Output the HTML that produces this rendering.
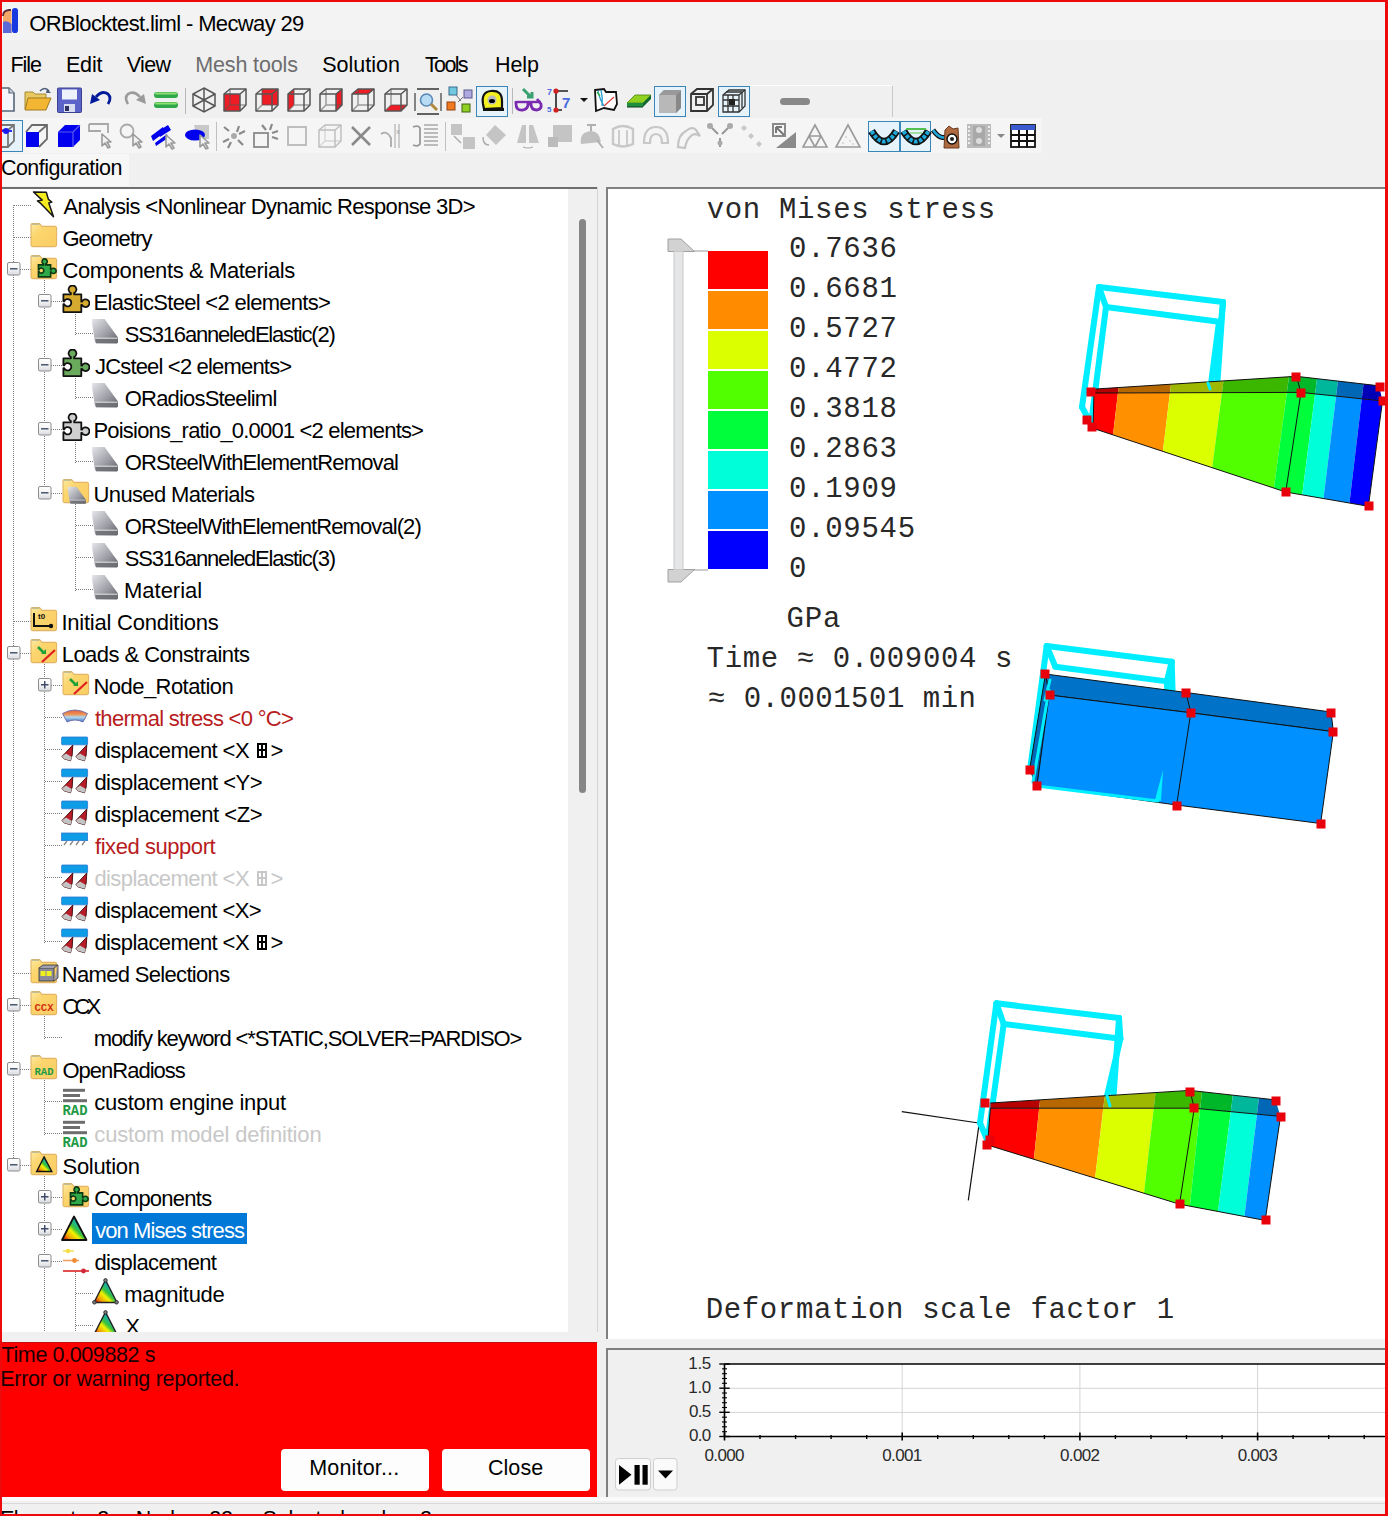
<!DOCTYPE html>
<html><head><meta charset="utf-8"><style>
html,body{margin:0;padding:0;}
body{width:1388px;height:1516px;position:relative;overflow:hidden;background:#f0f0f0;font-family:"Liberation Sans",sans-serif;}
.r{position:absolute;}
.t{position:absolute;white-space:pre;}
svg{position:absolute;overflow:visible;}
</style></head><body>
<div class="r" style="left:0px;top:0px;width:1388px;height:40px;background:#f3f3f3;"></div>
<div class="r" style="left:0px;top:40px;width:1388px;height:44px;background:#f0f0f0;"></div>
<div class="r" style="left:0px;top:84px;width:1388px;height:34px;background:#f0f0f0;"></div>
<div class="r" style="left:0px;top:118px;width:1042px;height:35px;background:#f5f5f5;"></div>
<div class="r" style="left:1042px;top:118px;width:346px;height:35px;background:#f0f0f0;"></div>
<div class="r" style="left:0px;top:153px;width:1388px;height:34px;background:#f0f0f0;"></div>
<div class="r" style="left:0px;top:154px;width:129px;height:32px;background:#f7f7f7;"></div>
<svg style="left:-6.0px;top:86.0px" width="28" height="28" viewBox="0 0 28 28"><path d="M-4,2 H15 L20,7 V25 H-4 Z" fill="#f4f6fa" stroke="#56657a" stroke-width="1.6"/><path d="M15,2 V7 H20" fill="#c9d2dd" stroke="#56657a" stroke-width="1.2"/></svg>
<svg style="left:23.5px;top:86.0px" width="28" height="28" viewBox="0 0 28 28"><path d="M1,6 H9 L11,8 H22 V23 H1 Z" fill="#e8c860" stroke="#a88a30" stroke-width="1"/><path d="M4,12 H27 L22,24 H1 Z" fill="#f2b632" stroke="#a07a20" stroke-width="1"/><path d="M16,5 Q21,0 25,5" fill="none" stroke="#4a5a78" stroke-width="1.6"/><path d="M23,3 L27,7 L22,7 Z" fill="#4a5a78"/></svg>
<svg style="left:55.5px;top:86.0px" width="28" height="28" viewBox="0 0 28 28"><rect x="1.5" y="2" width="24" height="24.5" rx="1" fill="#5b63c8" stroke="#3a4090" stroke-width="1"/><rect x="6" y="3.5" width="15" height="10" fill="#eef2fb"/><rect x="8" y="18" width="11" height="8" fill="#d8dcf0"/><rect x="9" y="20" width="4" height="5" fill="#303060"/></svg>
<svg style="left:87.5px;top:86.0px" width="28" height="28" viewBox="0 0 28 28"><path d="M8,11 Q14,4 20,8 Q24,12 20,18" fill="none" stroke="#001a9a" stroke-width="2.8"/><path d="M2,18 L4,8 L12,14 Z" fill="#001a9a"/></svg>
<svg style="left:119.5px;top:86.0px" width="28" height="28" viewBox="0 0 28 28"><path d="M20,11 Q14,4 8,8 Q4,12 8,18" fill="none" stroke="#9a9a9a" stroke-width="2.6"/><path d="M26,18 L24,8 L16,14 Z" fill="#9a9a9a"/></svg>
<svg style="left:151.5px;top:86.0px" width="28" height="28" viewBox="0 0 28 28"><rect x="2" y="6" width="24" height="6" rx="3" fill="#2ea84a"/><rect x="2" y="16" width="24" height="6" rx="3" fill="#2ea84a"/><rect x="3" y="6.5" width="22" height="2" rx="1" fill="#8ee070"/><rect x="3" y="16.5" width="22" height="2" rx="1" fill="#8ee070"/></svg>
<div class="r" style="left:185px;top:88px;width:1px;height:26px;background:#b8b8b8"></div>
<svg style="left:189.5px;top:86.0px" width="28" height="28" viewBox="0 0 28 28"><g fill="none" stroke="#555" stroke-width="1.5"><path d="M14,2 L25,8 V20 L14,26 L3,20 V8 Z"/><path d="M14,2 V26 M3,8 L25,20 M25,8 L3,20"/></g></svg>
<svg style="left:221.0px;top:86.0px" width="28" height="28" viewBox="0 0 28 28"><path d="M3,8 H19 V25 H3 Z" fill="#ee1c24"/><g fill="none" stroke="#555" stroke-width="1.5" stroke-linejoin="round"><path d="M3,8 L9,3 H25 V19 L19,25 H3 Z"/><path d="M3,8 H19 V25 M19,8 L25,3"/><path d="M9,3 V19 H25 M9,19 L3,25" opacity="0.55"/></g></svg>
<svg style="left:253.0px;top:86.0px" width="28" height="28" viewBox="0 0 28 28"><path d="M9,3 H25 V19 H9 Z" fill="#ee1c24"/><g fill="none" stroke="#555" stroke-width="1.5" stroke-linejoin="round"><path d="M3,8 L9,3 H25 V19 L19,25 H3 Z"/><path d="M3,8 H19 V25 M19,8 L25,3"/><path d="M9,3 V19 H25 M9,19 L3,25" opacity="0.55"/></g></svg>
<svg style="left:285.0px;top:86.0px" width="28" height="28" viewBox="0 0 28 28"><path d="M3,8 L9,3 V19 L3,25 Z" fill="#ee1c24"/><g fill="none" stroke="#555" stroke-width="1.5" stroke-linejoin="round"><path d="M3,8 L9,3 H25 V19 L19,25 H3 Z"/><path d="M3,8 H19 V25 M19,8 L25,3"/><path d="M9,3 V19 H25 M9,19 L3,25" opacity="0.55"/></g></svg>
<svg style="left:317.0px;top:86.0px" width="28" height="28" viewBox="0 0 28 28"><path d="M19,8 L25,3 V19 L19,25 Z" fill="#ee1c24"/><g fill="none" stroke="#555" stroke-width="1.5" stroke-linejoin="round"><path d="M3,8 L9,3 H25 V19 L19,25 H3 Z"/><path d="M3,8 H19 V25 M19,8 L25,3"/><path d="M9,3 V19 H25 M9,19 L3,25" opacity="0.55"/></g></svg>
<svg style="left:349.0px;top:86.0px" width="28" height="28" viewBox="0 0 28 28"><path d="M3,8 L9,3 H25 L19,8 Z" fill="#ee1c24"/><g fill="none" stroke="#555" stroke-width="1.5" stroke-linejoin="round"><path d="M3,8 L9,3 H25 V19 L19,25 H3 Z"/><path d="M3,8 H19 V25 M19,8 L25,3"/><path d="M9,3 V19 H25 M9,19 L3,25" opacity="0.55"/></g></svg>
<svg style="left:381.5px;top:86.0px" width="28" height="28" viewBox="0 0 28 28"><path d="M3,25 L9,19 H25 L19,25 Z" fill="#ee1c24"/><g fill="none" stroke="#555" stroke-width="1.5" stroke-linejoin="round"><path d="M3,8 L9,3 H25 V19 L19,25 H3 Z"/><path d="M3,8 H19 V25 M19,8 L25,3"/><path d="M9,3 V19 H25 M9,19 L3,25" opacity="0.55"/></g></svg>
<svg style="left:413.5px;top:87.0px" width="28" height="28" viewBox="0 0 28 28"><path d="M3,2 H25 M3,27 H25" stroke="#333" stroke-width="1.6"/><path d="M1,6 V24 M27,6 V24" stroke="#555" stroke-width="1.4"/><circle cx="12.5" cy="13" r="6" fill="#b8dcf4" stroke="#5a88b8" stroke-width="1.6"/><path d="M17,17 L23,23" stroke="#b08a40" stroke-width="3"/></svg>
<svg style="left:445.5px;top:86.0px" width="28" height="28" viewBox="0 0 28 28"><rect x="3" y="1" width="8" height="8" fill="#70c8e0" stroke="#3a6a8a"/><rect x="18" y="4" width="8" height="8" fill="#b0a8e0" stroke="#5a5a8a"/><rect x="1" y="16" width="8" height="8" fill="#f07820" stroke="#904010"/><rect x="16" y="18" width="8" height="8" fill="#90d020" stroke="#406010"/><path d="M10,9 L15,15 M17,11 L12,16" stroke="#777" stroke-width="1"/></svg>
<div class="r" style="left:476px;top:85.5px;width:30px;height:29.0px;border:1px solid #3a86b8;background:#e6f3fb"></div>
<svg style="left:478.0px;top:86.5px" width="28" height="28" viewBox="0 0 28 28"><path d="M5,17 Q3,5 13,4 Q24,3 24,14 L24,21 L6,22 Z" fill="#f5f020" stroke="#111" stroke-width="2.2"/><path d="M5,21 H26 L26,24 H5 Z" fill="#111"/><circle cx="14" cy="13" r="4.5" fill="#bbb"/><ellipse cx="14" cy="14" rx="3" ry="2" fill="#000"/></svg>
<div class="r" style="left:512px;top:88px;width:1px;height:26px;background:#b8b8b8"></div>
<svg style="left:515.0px;top:87.0px" width="28" height="28" viewBox="0 0 28 28"><path d="M8,2 L16,10 M12,10 H17 V5" stroke="#3aa070" stroke-width="3" fill="none"/><path d="M1,14 V17 Q1,24 8,23 Q13,22 13,17 H16 Q16,23 22,23 Q27,22 26,17 L22,12" fill="none" stroke="#7a2ab0" stroke-width="2.8"/><path d="M1,15 H26" stroke="#7a2ab0" stroke-width="2.4"/></svg>
<svg style="left:546.0px;top:86.0px" width="28" height="28" viewBox="0 0 28 28"><text x="1" y="9" font-family="Liberation Sans" font-weight="bold" font-size="9" fill="#4a6ae0">7</text><text x="1" y="26" font-family="Liberation Sans" font-weight="bold" font-size="8" fill="#4a6ae0">5</text><path d="M10,5 V24 H16 M10,5 H22" stroke="#222" stroke-width="1.6" fill="none"/><circle cx="10" cy="5" r="2.6" fill="#d02020"/><circle cx="10" cy="24" r="2.6" fill="#d02020"/><text x="16" y="22" font-family="Liberation Sans" font-weight="bold" font-size="15" fill="#4a6ae0">7</text></svg>
<svg style="left:570.0px;top:86.0px" width="28" height="28" viewBox="0 0 28 28"><path d="M10,12 H18 L14,16 Z" fill="#111"/></svg>
<svg style="left:592.0px;top:86.0px" width="28" height="28" viewBox="0 0 28 28"><path d="M3,4 L12,3 L14,6 L24,6 L25,18 L22,24 L12,22 L4,25 Z" fill="#fff" stroke="#111" stroke-width="1.8"/><path d="M6,5 Q8,14 12,20 M9,4 Q11,12 10,20" stroke="#2aa0d0" stroke-width="1.3" fill="none"/><path d="M12,20 L22,11" stroke="#e04040" stroke-width="1.2"/><path d="M5,6 L8,10" stroke="#30b040" stroke-width="1.3"/></svg>
<svg style="left:624.5px;top:86.0px" width="28" height="28" viewBox="0 0 28 28"><path d="M2,17 L10,9 H26 L18,17 Z" fill="#90d020" stroke="#4a8010" stroke-width="0.8"/><path d="M2,17 H18 V21 H2 Z" fill="#209040"/><path d="M18,17 L26,9 V13 L18,21 Z" fill="#106a30"/><path d="M2,21 H18" stroke="#0a3a1a" stroke-width="1"/></svg>
<div class="r" style="left:654px;top:85.5px;width:30px;height:29.0px;border:1px solid #3a86b8;background:#e6f3fb"></div>
<svg style="left:656.0px;top:86.5px" width="28" height="28" viewBox="0 0 28 28"><path d="M3,8 L8,3 H25 V21 L20,26 H3 Z" fill="#b8b8b8"/><path d="M20,8 L25,3 V21 L20,26 Z" fill="#888"/><path d="M3,8 L8,3 H25 L20,8 Z" fill="#999"/></svg>
<svg style="left:688.0px;top:86.0px" width="28" height="28" viewBox="0 0 28 28"><g fill="none" stroke="#333" stroke-width="1.8"><path d="M3,8 L9,3 H25 V19 L19,25 H3 Z"/><path d="M3,8 H19 V25 M19,8 L25,3"/><rect x="8" y="11" width="8" height="8"/></g></svg>
<div class="r" style="left:718px;top:85.5px;width:30px;height:29.0px;border:1px solid #3a86b8;background:#e6f3fb"></div>
<svg style="left:720.0px;top:86.5px" width="28" height="28" viewBox="0 0 28 28"><g fill="none" stroke="#333" stroke-width="1.3"><path d="M3,8 L9,3 H25 V19 L19,25 H3 Z"/><path d="M3,8 H19 V25 M19,8 L25,3"/><path d="M3,13 H19 M3,19 H19 M8,8 V25 M13,8 V25 M6,5 H22 M22,5 V21"/></g><rect x="9" y="12" width="6" height="6" fill="#222"/></svg>
<div class="r" style="left:750px;top:85px;width:141px;height:1px;background:#ffffff"></div>
<div class="r" style="left:780px;top:98px;width:30px;height:7px;border-radius:3.5px;background:#888"></div>
<div class="r" style="left:892px;top:86px;width:1px;height:31px;background:#c8c8c8"></div>
<div class="r" style="left:0px;top:120px;width:21px;height:30px;border:1px solid #3a86b8;background:#e6f3fb"></div>
<svg style="left:-2.0px;top:121.5px" width="28" height="28" viewBox="0 0 28 28"><g fill="none" stroke="#777" stroke-width="1.8"><path d="M-2,8 L4,3 H16 V19 L10,25 H-2"/><path d="M10,8 V25 M10,8 L16,3"/></g><path d="M-2,8 H10" stroke="#777" stroke-width="1.8"/><circle cx="8" cy="9" r="3" fill="#1a1aee"/><path d="M1,9 H14" stroke="#1a1aee" stroke-width="1.8"/></svg>
<svg style="left:23.5px;top:121.5px" width="28" height="28" viewBox="0 0 28 28"><path d="M2,10 H15 V25 H2 Z" fill="#0000ee"/><g fill="none" stroke="#6a6a6a" stroke-width="1.8"><path d="M2,10 L8,3 H23 V17 L15,25 M15,10 L23,3"/></g></svg>
<svg style="left:55.5px;top:121.5px" width="28" height="28" viewBox="0 0 28 28"><path d="M2,10 L9,3 H24 V18 L17,25 H2 Z" fill="#0000ee"/><path d="M2,10 H17 V25 M17,10 L24,3" stroke="#5a5aee" stroke-width="1.2" fill="none"/></svg>
<svg style="left:86.5px;top:121.5px" width="28" height="28" viewBox="0 0 28 28"><path d="M2,2 H21 V11 M2,2 V9 H14" fill="none" stroke="#a8a8a8" stroke-width="1.8"/><path d="M15,12 L15,24 L18,21 L21,26 L23,25 L20,20 L24,20 Z" fill="#f2f2f2" stroke="#9a9a9a" stroke-width="1.6" stroke-linejoin="round"/></svg>
<svg style="left:118.0px;top:121.5px" width="28" height="28" viewBox="0 0 28 28"><circle cx="9" cy="9" r="6.5" fill="none" stroke="#a8a8a8" stroke-width="1.8"/><path d="M15,12 L15,24 L18,21 L21,26 L23,25 L20,20 L24,20 Z" fill="#f2f2f2" stroke="#9a9a9a" stroke-width="1.6" stroke-linejoin="round"/></svg>
<svg style="left:149.5px;top:121.5px" width="28" height="28" viewBox="0 0 28 28"><path d="M1,14 L13,5 L15,10 L3,19 Z M5,21 L17,12 L18,16 L6,24 Z" fill="#0000ee"/><path d="M7,10 L18,3 L21,8 L10,15 Z" fill="#0000ee"/><path d="M16,13 L16,25 L19,22 L22,27 L24,26 L21,21 L25,21 Z" fill="#f2f2f2" stroke="#9a9a9a" stroke-width="1.6" stroke-linejoin="round"/></svg>
<svg style="left:183.5px;top:121.5px" width="28" height="28" viewBox="0 0 28 28"><path d="M10,3 H25 V17 H14 Z" fill="#c8c8c8"/><ellipse cx="11" cy="13" rx="10" ry="5.5" fill="#0000ee"/><path d="M16,13 L16,25 L19,22 L22,27 L24,26 L21,21 L25,21 Z" fill="#f2f2f2" stroke="#9a9a9a" stroke-width="1.6" stroke-linejoin="round"/></svg>
<div class="r" style="left:216px;top:122px;width:1px;height:29px;background:#c0c0c0"></div>
<svg style="left:220.0px;top:121.5px" width="28" height="28" viewBox="0 0 28 28"><circle cx="14" cy="14" r="3" fill="#aaa"/><g stroke="#8a8a8a" stroke-width="2.2"><path d="M4,5 L9,9 M19,4 L17,10 M25,9 L19,12 M3,20 L9,17 M8,26 L11,20 M23,23 L18,18"/></g></svg>
<svg style="left:252.0px;top:121.5px" width="28" height="28" viewBox="0 0 28 28"><rect x="2" y="11" width="14" height="14" fill="none" stroke="#8a8a8a" stroke-width="1.8"/><g stroke="#8a8a8a" stroke-width="2.2"><path d="M10,3 L14,8 M20,2 L18,8 M26,9 L20,11 M26,17 L20,15"/></g></svg>
<svg style="left:283.5px;top:121.5px" width="28" height="28" viewBox="0 0 28 28"><rect x="4" y="5" width="18" height="18" fill="none" stroke="#b8b8b8" stroke-width="1.8"/></svg>
<svg style="left:315.5px;top:121.5px" width="28" height="28" viewBox="0 0 28 28"><g fill="none" stroke="#bdbdbd" stroke-width="1.4" stroke-linejoin="round"><path d="M3,8 L9,3 H25 V19 L19,25 H3 Z"/><path d="M3,8 H19 V25 M19,8 L25,3"/><path d="M9,3 V19 H25 M9,19 L3,25" opacity="0.55"/></g></svg>
<svg style="left:347.0px;top:121.5px" width="28" height="28" viewBox="0 0 28 28"><path d="M5,5 L23,23 M23,5 L5,23" stroke="#8a8a8a" stroke-width="2.6"/></svg>
<svg style="left:379.0px;top:121.5px" width="28" height="28" viewBox="0 0 28 28"><path d="M2,12 Q8,8 12,16 V25" fill="none" stroke="#aaa" stroke-width="1.8"/><path d="M16,2 V26 M20,2 V26" stroke="#bbb" stroke-width="1.4"/><text x="17" y="12" font-size="6" fill="#999" font-family="Liberation Sans">X</text></svg>
<svg style="left:412.0px;top:121.5px" width="28" height="28" viewBox="0 0 28 28"><path d="M1,5 Q6,3 8,6 V22 Q6,25 1,23" fill="none" stroke="#9a9a9a" stroke-width="1.8"/><g stroke="#a8a8a8" stroke-width="1.6"><path d="M12,3 H26 M12,7 H26 M12,11 H26 M12,15 H26 M12,19 H26 M12,23 H26"/></g></svg>
<div class="r" style="left:445px;top:122px;width:1px;height:29px;background:#c0c0c0"></div>
<svg style="left:449.0px;top:121.5px" width="28" height="28" viewBox="0 0 28 28"><rect x="2" y="2" width="11" height="11" fill="#c4c4c4"/><rect x="14" y="15" width="12" height="12" fill="#c4c4c4"/><path d="M5,14 L12,21" stroke="#aaa" stroke-width="1.4"/></svg>
<svg style="left:481.0px;top:121.5px" width="28" height="28" viewBox="0 0 28 28"><path d="M14,3 L25,13 L15,23 L5,13 Z" fill="#c4c4c4"/><path d="M2,15 Q2,23 8,23" fill="none" stroke="#aaa" stroke-width="1.4"/></svg>
<svg style="left:514.0px;top:121.5px" width="28" height="28" viewBox="0 0 28 28"><path d="M3,21 L8,3 H12 V21 Z M15,3 H19 L25,21 H15 Z" fill="#c4c4c4"/><path d="M9,25 Q14,27 19,25" fill="none" stroke="#aaa" stroke-width="1.2"/></svg>
<svg style="left:545.5px;top:121.5px" width="28" height="28" viewBox="0 0 28 28"><rect x="7" y="3" width="19" height="17" fill="#c4c4c4"/><rect x="2" y="15" width="10" height="10" fill="#bbb"/></svg>
<svg style="left:577.0px;top:121.5px" width="28" height="28" viewBox="0 0 28 28"><path d="M4,22 Q2,10 14,9 Q22,9 24,20 Z" fill="#c0c0c0"/><path d="M10,3 H19 M14,3 V9 M20,18 L26,26" stroke="#b0b0b0" stroke-width="2"/></svg>
<svg style="left:609.0px;top:121.5px" width="28" height="28" viewBox="0 0 28 28"><path d="M4,7 Q14,1 24,7 V22 Q14,27 4,22 Z" fill="none" stroke="#c8c8c8" stroke-width="2.4"/><path d="M10,8 V23 M18,8 V23" stroke="#c8c8c8" stroke-width="1.8"/></svg>
<svg style="left:641.5px;top:121.5px" width="28" height="28" viewBox="0 0 28 28"><path d="M2,21 Q2,5 14,5 Q26,5 26,21 H20 Q20,12 14,12 Q8,12 8,21 Z" fill="none" stroke="#c8c8c8" stroke-width="2.2"/></svg>
<svg style="left:674.0px;top:121.5px" width="28" height="28" viewBox="0 0 28 28"><path d="M4,25 Q4,13 12,9 Q18,4 22,8 L26,14 Q20,10 16,15 Q12,19 11,26 Z" fill="none" stroke="#c4c4c4" stroke-width="2.2"/></svg>
<svg style="left:705.5px;top:121.5px" width="28" height="28" viewBox="0 0 28 28"><circle cx="4" cy="4" r="3" fill="#aaa"/><circle cx="24" cy="4" r="3" fill="#aaa"/><path d="M6,6 L12,12 M22,6 L16,12 M14,16 V25" stroke="#999" stroke-width="2"/><circle cx="14" cy="21" r="2.5" fill="#aaa"/></svg>
<svg style="left:738.0px;top:121.5px" width="28" height="28" viewBox="0 0 28 28"><path d="M3,6 L6,3 L9,6 L6,9 Z M10,14 L13,11 L16,14 L13,17 Z M18,22 L21,19 L24,22 L21,25 Z" fill="#c8c8c8"/></svg>
<svg style="left:770.5px;top:121.5px" width="28" height="28" viewBox="0 0 28 28"><rect x="2" y="2" width="12" height="12" fill="none" stroke="#8a8a8a" stroke-width="2"/><path d="M5,5 L13,13 M5,5 H11 M5,5 V11" stroke="#777" stroke-width="2"/><path d="M5,26 L25,26 L25,10 Z" fill="#8a8a8a"/></svg>
<svg style="left:801.0px;top:121.5px" width="28" height="28" viewBox="0 0 28 28"><path d="M14,3 L26,25 H2 Z M8,14 H20 M14,25 L20,14 M14,25 L8,14" fill="none" stroke="#9a9a9a" stroke-width="1.6"/></svg>
<svg style="left:833.5px;top:121.5px" width="28" height="28" viewBox="0 0 28 28"><path d="M14,3 L26,25 H2 Z" fill="none" stroke="#9a9a9a" stroke-width="1.6"/><g fill="#bbb"><circle cx="12" cy="15" r="0.8"/><circle cx="16" cy="19" r="0.8"/><circle cx="9" cy="21" r="0.8"/><circle cx="19" cy="22" r="0.8"/></g></svg>
<div class="r" style="left:868px;top:120.5px;width:30px;height:29.5px;border:1px solid #3a86b8;background:#e6f3fb"></div>
<div class="r" style="left:900px;top:120.5px;width:29px;height:29.5px;border:1px solid #3a86b8;background:#e6f3fb"></div>
<svg style="left:870.0px;top:122.0px" width="28" height="28" viewBox="0 0 28 28"><path d="M1.5,9 Q14,30 26.5,9" fill="none" stroke="#111" stroke-width="7.5"/><path d="M1.5,9 Q14,30 26.5,9" fill="none" stroke="#20a8d8" stroke-width="4" stroke-dasharray="3.5 1.5"/></svg>
<svg style="left:901.5px;top:122.0px" width="28" height="28" viewBox="0 0 28 28"><path d="M1.5,9 Q14,30 26.5,9" fill="none" stroke="#111" stroke-width="7.5"/><path d="M1.5,9 Q14,30 26.5,9" fill="none" stroke="#20a8d8" stroke-width="4" stroke-dasharray="3.5 1.5"/><path d="M4,7 H24" stroke="#50c050" stroke-width="2"/><path d="M8,11 H20" stroke="#a0e0a0" stroke-width="2"/></svg>
<svg style="left:932.5px;top:121.5px" width="28" height="28" viewBox="0 0 28 28"><path d="M0,8 Q10,22 18,10" fill="none" stroke="#111" stroke-width="5"/><path d="M0,8 Q10,22 18,10" fill="none" stroke="#20a8d8" stroke-width="2.6"/><path d="M12,8 L16,4 L20,7 L25,6 L26,26 L11,26 Z" fill="#b06a40" stroke="#6a3a20" stroke-width="1"/><circle cx="19" cy="17" r="5" fill="#fff" stroke="#111" stroke-width="1.5"/><circle cx="19" cy="17" r="2" fill="#222"/></svg>
<svg style="left:965.0px;top:121.5px" width="28" height="28" viewBox="0 0 28 28"><rect x="2" y="2" width="24" height="24" fill="#bbb"/><path d="M4,4 V24 M24,4 V24" stroke="#eee" stroke-width="2" stroke-dasharray="2 2"/><rect x="8" y="4" width="12" height="20" fill="#a8a8a8"/><circle cx="14" cy="8" r="3" fill="#ddd"/><circle cx="14" cy="19" r="3" fill="#ddd"/></svg>
<svg style="left:987.0px;top:121.5px" width="28" height="28" viewBox="0 0 28 28"><path d="M10,12 H18 L14,16 Z" fill="#888"/></svg>
<svg style="left:1008.5px;top:121.5px" width="28" height="28" viewBox="0 0 28 28"><rect x="2" y="3" width="24" height="22" fill="#fff" stroke="#111" stroke-width="1.8"/><rect x="2" y="3" width="24" height="5" fill="#3a5ad0"/><path d="M2,13 H26 M2,19 H26 M10,8 V25 M18,8 V25" stroke="#111" stroke-width="2"/></svg>
<svg style="left:0;top:0" width="22" height="36" viewBox="0 0 22 36"><path d="M3,16 Q3,10.5 9,10 L11.5,10 L11.5,33 L3,33 Z" fill="#f4a868"/><path d="M3,16 Q3,10.5 9,10 L11,10" fill="none" stroke="#5a2a3a" stroke-width="1.8"/><path d="M3,22 Q7,20 11.5,24 L11.5,33 L3,33 Z" fill="#5a68d8"/><rect x="12" y="8" width="6" height="25" rx="2.8" fill="#1838e0"/></svg>
<div class="t" style="left:29.26px;top:10.97px;font-size:22px;line-height:26px;font-family:'Liberation Sans',sans-serif;color:#000;letter-spacing:-0.633px;">ORBlocktest.liml - Mecway 29</div>
<div class="t" style="left:10.44px;top:52.35px;font-size:21.5px;line-height:26px;font-family:'Liberation Sans',sans-serif;color:#000;letter-spacing:-1.042px;">File</div>
<div class="t" style="left:65.94px;top:52.35px;font-size:21.5px;line-height:26px;font-family:'Liberation Sans',sans-serif;color:#000;letter-spacing:-0.175px;">Edit</div>
<div class="t" style="left:126.71px;top:52.35px;font-size:21.5px;line-height:26px;font-family:'Liberation Sans',sans-serif;color:#000;letter-spacing:-0.620px;">View</div>
<div class="t" style="left:195.24px;top:52.35px;font-size:21.5px;line-height:26px;font-family:'Liberation Sans',sans-serif;color:#6d6d6d;letter-spacing:-0.136px;">Mesh tools</div>
<div class="t" style="left:322.22px;top:52.35px;font-size:21.5px;line-height:26px;font-family:'Liberation Sans',sans-serif;color:#000;letter-spacing:-0.003px;">Solution</div>
<div class="t" style="left:425.02px;top:52.35px;font-size:21.5px;line-height:26px;font-family:'Liberation Sans',sans-serif;color:#000;letter-spacing:-1.654px;">Tools</div>
<div class="t" style="left:494.94px;top:52.35px;font-size:21.5px;line-height:26px;font-family:'Liberation Sans',sans-serif;color:#000;letter-spacing:-0.084px;">Help</div>
<div class="t" style="left:0.91px;top:155.45px;font-size:21.5px;line-height:26px;font-family:'Liberation Sans',sans-serif;color:#000;letter-spacing:-0.533px;">Configuration</div>
<div class="r" style="left:2px;top:187px;width:596px;height:1145px;background:#ffffff;"></div>
<div class="r" style="left:2px;top:187px;width:596px;height:2px;background:#6e6e6e;"></div>
<div class="r" style="left:568px;top:189px;width:29px;height:1143px;background:#f0f0f0;"></div>
<div class="r" style="left:579px;top:219px;width:7px;height:574px;background:#858585;border-radius:4px;"></div>
<div class="r" style="left:597px;top:187px;width:1px;height:1145px;background:#d4d4d4;"></div>
<div class="r" style="left:2px;top:1332px;width:596px;height:10px;background:#f0f0f0;"></div>

<svg width="0" height="0" style="position:absolute;left:0;top:0">
<defs>
<linearGradient id="gFold" x1="0" y1="0" x2="1" y2="1"><stop offset="0" stop-color="#fdeaa0"/><stop offset="0.35" stop-color="#fcd56e"/><stop offset="1" stop-color="#f9cd62"/></linearGradient>
<linearGradient id="gMat" x1="0" y1="0" x2="1" y2="1"><stop offset="0" stop-color="#e4e4ea"/><stop offset="0.6" stop-color="#9a9aa2"/><stop offset="1" stop-color="#5d5d64"/></linearGradient>
<linearGradient id="gBox" x1="0" y1="0" x2="0" y2="1"><stop offset="0" stop-color="#ffffff"/><stop offset="0.5" stop-color="#f4f4f4"/><stop offset="1" stop-color="#d8dbe2"/></linearGradient>
<linearGradient id="gTri" x1="1" y1="0" x2="0" y2="1"><stop offset="0.15" stop-color="#1c6fd0"/><stop offset="0.35" stop-color="#18b39a"/><stop offset="0.5" stop-color="#3cc23c"/><stop offset="0.62" stop-color="#f2f200"/><stop offset="0.8" stop-color="#f0a000"/><stop offset="0.95" stop-color="#d01010"/></linearGradient>
<linearGradient id="gArc" x1="0" y1="0" x2="0" y2="1"><stop offset="0" stop-color="#e06040"/><stop offset="0.35" stop-color="#f09050"/><stop offset="0.6" stop-color="#b0d8f0"/><stop offset="1" stop-color="#4070c0"/></linearGradient>
<symbol id="folder" viewBox="0 0 28 28" width="28" height="28">
 <path d="M1,2.2 Q1,0.6 2.6,0.6 H9.5 L12,3.4 H25 Q26.6,3.4 26.6,5 V22 Q26.6,23.6 25,23.6 H2.6 Q1,23.6 1,22 Z" fill="url(#gFold)" stroke="#e2b466" stroke-width="1.1"/>
 <path d="M1.5,1.2 H9.2" stroke="#b8b89a" stroke-width="1.2"/>
</symbol>
<symbol id="puzzleP" viewBox="0 0 28 28" width="28" height="28">
 <path d="M1.4,9.3 H8.9 V8 A3.9,3.9 0 1 1 12.1,8 V9.3 H19.3 V16.6 H20 A3.9,3.9 0 1 1 20,19.8 H19.3 V27.1 H1.4 V19.2 H2.2 A3.7,3.7 0 1 0 2.2,16.3 H1.4 Z" stroke="#111" stroke-width="1.8" stroke-linejoin="round"/>
</symbol>
<symbol id="mat" viewBox="0 0 28 28" width="28" height="28">
 <path d="M1.2,1 H13.6 L27,19.5 V24.6 L26,25.4 H5.2 L4,24 L1,5 Z" fill="url(#gMat)"/>
 <path d="M4.2,20.4 H26.6 V25 H5.2 Z" fill="#6f6f76" opacity="0.85"/>
 <path d="M4.2,20.2 H26.6" stroke="#eeeef2" stroke-width="0.9"/>
</symbol>
<symbol id="bolt" viewBox="0 0 28 28" width="28" height="28">
 <path d="M3.5,2 L16.3,2.3 L18.4,9.4 L21.8,12 L18.8,13 L23.5,26.8 L10,12.8 L7.4,10.9 L12.2,10.1 Z" fill="#f4ec20" stroke="#151515" stroke-width="1.5" stroke-linejoin="round"/>
</symbol>
<symbol id="disp" viewBox="0 0 28 28" width="28" height="28">
 <rect x="0.6" y="1" width="26" height="7.8" rx="0.8" fill="#0f9ce6" stroke="#2a7ad0" stroke-width="0.8"/>
 <path d="M11.8,9 L1,20.5 L3,22.8 L9.5,24.8 L11.2,19 Z" fill="#b81c28" stroke="#3a0808" stroke-width="0.9"/>
 <path d="M1,20.5 L5,17.5 L10.8,21 L9.5,24.8 L3,22.8 Z" fill="#c4c4c4"/>
 <path d="M25.8,9 L15,20.5 L17,22.8 L23.5,24.8 L25.2,19 Z" fill="#b81c28" stroke="#3a0808" stroke-width="0.9"/>
 <path d="M15,20.5 L19,17.5 L24.8,21 L23.5,24.8 L17,22.8 Z" fill="#c4c4c4"/>
</symbol>
<symbol id="fixed" viewBox="0 0 28 28" width="28" height="28">
 <rect x="0.6" y="1" width="26" height="7.6" fill="#0f9ce6" stroke="#2a7ad0" stroke-width="0.8"/>
 <path d="M3,13 L6,9 M9,13 L12,9 M15,13 L18,9 M21,13 L24,9" stroke="#8a8a8a" stroke-width="1.4"/>
</symbol>
<symbol id="arc" viewBox="0 0 28 28" width="28" height="28">
 <path d="M1.5,4.5 Q14,-2.5 26.5,4.5 L22,13 Q14,9 6,13 Z" fill="url(#gArc)" stroke="#6a6aa8" stroke-width="0.9"/>
</symbol>
<symbol id="tri" viewBox="0 0 28 28" width="28" height="28">
 <path d="M13,1.5 L25.5,25 H1 Z" fill="url(#gTri)" stroke="#111" stroke-width="1.8" stroke-linejoin="round"/>
</symbol>
<symbol id="trinode" viewBox="0 0 28 28" width="28" height="28">
 <path d="M13.5,2 L25,24.5 H2 Z" fill="url(#gTri)" stroke="#222" stroke-width="1.4"/>
 <circle cx="13.5" cy="2.4" r="1.8" fill="#777" stroke="#222" stroke-width="0.8"/>
 <circle cx="2.4" cy="24.3" r="1.8" fill="#777" stroke="#222" stroke-width="0.8"/>
 <circle cx="24.6" cy="24.3" r="1.8" fill="#777" stroke="#222" stroke-width="0.8"/>
</symbol>
<symbol id="darrows" viewBox="0 0 28 28" width="28" height="28">
 <path d="M1,4 H12" stroke="#f5e060" stroke-width="1.6"/><circle cx="6" cy="4" r="2.2" fill="#f5e040"/>
 <path d="M1,13.5 H17" stroke="#f0a060" stroke-width="1.6"/><circle cx="12.5" cy="13.5" r="2.4" fill="#f08a30"/>
 <path d="M1,24 H27" stroke="#e03c3c" stroke-width="1.8"/><circle cx="21.5" cy="24" r="2.4" fill="#d02a3a"/>
</symbol>
<symbol id="raddoc" viewBox="0 0 28 28" width="28" height="28">
 <rect x="2" y="0.8" width="22" height="3" fill="#6d6d6d"/>
 <rect x="2" y="6" width="17" height="3" fill="#6d6d6d"/>
 <rect x="2" y="11.2" width="24" height="3" fill="#6d6d6d"/>
 <text x="1.5" y="26.5" font-family="Liberation Mono" font-weight="bold" font-size="14" fill="#1e9a46" textLength="25" lengthAdjust="spacingAndGlyphs">RAD</text>
</symbol>
<symbol id="exp_minus" viewBox="0 0 14 14" width="14" height="14">
 <rect x="0.5" y="0.5" width="12.5" height="12.5" rx="1.5" fill="url(#gBox)" stroke="#8c8c8c" stroke-width="1"/>
 <path d="M3,6.8 H10.5" stroke="#3b4a66" stroke-width="1.4"/>
</symbol>
<symbol id="exp_plus" viewBox="0 0 14 14" width="14" height="14">
 <rect x="0.5" y="0.5" width="12.5" height="12.5" rx="1.5" fill="url(#gBox)" stroke="#8c8c8c" stroke-width="1"/>
 <path d="M3,6.8 H10.5 M6.75,3 V10.5" stroke="#3b4a66" stroke-width="1.4"/>
</symbol>
</defs></svg>

<div class="r" style="left:0;top:0;width:568px;height:1332px;overflow:hidden">
<div class="r" style="left:13px;top:205px;width:1px;height:961px;background:repeating-linear-gradient(to bottom,#7c7c7c 0 1px,transparent 1px 2px)"></div>
<div class="r" style="left:44px;top:278px;width:1px;height:217px;background:repeating-linear-gradient(to bottom,#7c7c7c 0 1px,transparent 1px 2px)"></div>
<div class="r" style="left:44px;top:662px;width:1px;height:281px;background:repeating-linear-gradient(to bottom,#7c7c7c 0 1px,transparent 1px 2px)"></div>
<div class="r" style="left:44px;top:1014px;width:1px;height:25px;background:repeating-linear-gradient(to bottom,#7c7c7c 0 1px,transparent 1px 2px)"></div>
<div class="r" style="left:44px;top:1078px;width:1px;height:57px;background:repeating-linear-gradient(to bottom,#7c7c7c 0 1px,transparent 1px 2px)"></div>
<div class="r" style="left:44px;top:1174px;width:1px;height:158px;background:repeating-linear-gradient(to bottom,#7c7c7c 0 1px,transparent 1px 2px)"></div>
<div class="r" style="left:75px;top:310px;width:1px;height:25px;background:repeating-linear-gradient(to bottom,#7c7c7c 0 1px,transparent 1px 2px)"></div>
<div class="r" style="left:75px;top:374px;width:1px;height:25px;background:repeating-linear-gradient(to bottom,#7c7c7c 0 1px,transparent 1px 2px)"></div>
<div class="r" style="left:75px;top:438px;width:1px;height:25px;background:repeating-linear-gradient(to bottom,#7c7c7c 0 1px,transparent 1px 2px)"></div>
<div class="r" style="left:75px;top:502px;width:1px;height:89px;background:repeating-linear-gradient(to bottom,#7c7c7c 0 1px,transparent 1px 2px)"></div>
<div class="r" style="left:75px;top:1270px;width:1px;height:62px;background:repeating-linear-gradient(to bottom,#7c7c7c 0 1px,transparent 1px 2px)"></div>
<div class="r" style="left:92px;top:1213px;width:155px;height:31px;background:#0078d7"></div>
<div class="r" style="left:14px;top:205px;width:17px;height:1px;background:repeating-linear-gradient(to right,#7c7c7c 0 1px,transparent 1px 2px)"></div>
<svg style="left:30px;top:189.5px" width="28" height="28"><use href="#bolt"/></svg>
<div class="t" style="left:63.46px;top:193.77px;font-size:22px;line-height:26px;font-family:'Liberation Sans',sans-serif;color:#000;letter-spacing:-0.689px;">Analysis &lt;Nonlinear Dynamic Response 3D&gt;</div>
<div class="r" style="left:14px;top:237px;width:17px;height:1px;background:repeating-linear-gradient(to right,#7c7c7c 0 1px,transparent 1px 2px)"></div>
<svg style="left:30px;top:223px" width="28" height="28"><use href="#folder"/></svg>
<div class="t" style="left:62.39px;top:225.77px;font-size:22px;line-height:26px;font-family:'Liberation Sans',sans-serif;color:#000;letter-spacing:-0.919px;">Geometry</div>
<div class="r" style="left:20px;top:269px;width:11px;height:1px;background:repeating-linear-gradient(to right,#7c7c7c 0 1px,transparent 1px 2px)"></div>
<svg style="left:7px;top:262px" width="14" height="14"><use href="#exp_minus"/></svg>
<svg style="left:30px;top:255px" width="28" height="28"><use href="#folder"/><g transform="translate(7.5,3.5) scale(0.68)"><path d="M1.4,9.3 H8.9 V8 A3.9,3.9 0 1 1 12.1,8 V9.3 H19.3 V16.6 H20 A3.9,3.9 0 1 1 20,19.8 H19.3 V27.1 H1.4 V19.2 H2.2 A3.7,3.7 0 1 0 2.2,16.3 H1.4 Z" fill="#2faa4a" stroke="#0d3a12" stroke-width="2.4"/></g></svg>
<div class="t" style="left:62.38px;top:257.77px;font-size:22px;line-height:26px;font-family:'Liberation Sans',sans-serif;color:#000;letter-spacing:-0.380px;">Components &amp; Materials</div>
<div class="r" style="left:51px;top:301px;width:11px;height:1px;background:repeating-linear-gradient(to right,#7c7c7c 0 1px,transparent 1px 2px)"></div>
<svg style="left:38px;top:294px" width="14" height="14"><use href="#exp_minus"/></svg>
<svg style="left:61.5px;top:285px" width="28" height="28"><use href="#puzzleP" fill="#d6aa2e"/></svg>
<div class="t" style="left:93.50px;top:289.77px;font-size:22px;line-height:26px;font-family:'Liberation Sans',sans-serif;color:#000;letter-spacing:-0.708px;">ElasticSteel &lt;2 elements&gt;</div>
<div class="r" style="left:76px;top:333px;width:17px;height:1px;background:repeating-linear-gradient(to right,#7c7c7c 0 1px,transparent 1px 2px)"></div>
<svg style="left:91.3px;top:318px" width="28" height="28"><use href="#mat"/></svg>
<div class="t" style="left:124.80px;top:321.77px;font-size:22px;line-height:26px;font-family:'Liberation Sans',sans-serif;color:#000;letter-spacing:-1.189px;">SS316anneledElastic(2)</div>
<div class="r" style="left:51px;top:365px;width:11px;height:1px;background:repeating-linear-gradient(to right,#7c7c7c 0 1px,transparent 1px 2px)"></div>
<svg style="left:38px;top:358px" width="14" height="14"><use href="#exp_minus"/></svg>
<svg style="left:61.5px;top:349px" width="28" height="28"><use href="#puzzleP" fill="#6aaa5c"/></svg>
<div class="t" style="left:94.96px;top:353.77px;font-size:22px;line-height:26px;font-family:'Liberation Sans',sans-serif;color:#000;letter-spacing:-0.819px;">JCsteel &lt;2 elements&gt;</div>
<div class="r" style="left:76px;top:397px;width:17px;height:1px;background:repeating-linear-gradient(to right,#7c7c7c 0 1px,transparent 1px 2px)"></div>
<svg style="left:91.3px;top:382px" width="28" height="28"><use href="#mat"/></svg>
<div class="t" style="left:124.76px;top:385.77px;font-size:22px;line-height:26px;font-family:'Liberation Sans',sans-serif;color:#000;letter-spacing:-0.809px;">ORadiosSteeliml</div>
<div class="r" style="left:51px;top:429px;width:11px;height:1px;background:repeating-linear-gradient(to right,#7c7c7c 0 1px,transparent 1px 2px)"></div>
<svg style="left:38px;top:422px" width="14" height="14"><use href="#exp_minus"/></svg>
<svg style="left:61.5px;top:413px" width="28" height="28"><use href="#puzzleP" fill="#cfcfcf"/></svg>
<div class="t" style="left:93.50px;top:417.77px;font-size:22px;line-height:26px;font-family:'Liberation Sans',sans-serif;color:#000;letter-spacing:-0.808px;">Poisions_ratio_0.0001 &lt;2 elements&gt;</div>
<div class="r" style="left:76px;top:461px;width:17px;height:1px;background:repeating-linear-gradient(to right,#7c7c7c 0 1px,transparent 1px 2px)"></div>
<svg style="left:91.3px;top:446px" width="28" height="28"><use href="#mat"/></svg>
<div class="t" style="left:124.76px;top:449.77px;font-size:22px;line-height:26px;font-family:'Liberation Sans',sans-serif;color:#000;letter-spacing:-0.852px;">ORSteelWithElementRemoval</div>
<div class="r" style="left:51px;top:493px;width:11px;height:1px;background:repeating-linear-gradient(to right,#7c7c7c 0 1px,transparent 1px 2px)"></div>
<svg style="left:38px;top:486px" width="14" height="14"><use href="#exp_minus"/></svg>
<svg style="left:61.5px;top:479px" width="28" height="28"><use href="#folder"/><g transform="translate(5,7) scale(0.7)"><use href="#mat"/></g></svg>
<div class="t" style="left:93.60px;top:481.77px;font-size:22px;line-height:26px;font-family:'Liberation Sans',sans-serif;color:#000;letter-spacing:-0.653px;">Unused Materials</div>
<div class="r" style="left:76px;top:525px;width:17px;height:1px;background:repeating-linear-gradient(to right,#7c7c7c 0 1px,transparent 1px 2px)"></div>
<svg style="left:91.3px;top:510px" width="28" height="28"><use href="#mat"/></svg>
<div class="t" style="left:124.76px;top:513.77px;font-size:22px;line-height:26px;font-family:'Liberation Sans',sans-serif;color:#000;letter-spacing:-0.909px;">ORSteelWithElementRemoval(2)</div>
<div class="r" style="left:76px;top:557px;width:17px;height:1px;background:repeating-linear-gradient(to right,#7c7c7c 0 1px,transparent 1px 2px)"></div>
<svg style="left:91.3px;top:542px" width="28" height="28"><use href="#mat"/></svg>
<div class="t" style="left:124.80px;top:545.77px;font-size:22px;line-height:26px;font-family:'Liberation Sans',sans-serif;color:#000;letter-spacing:-1.180px;">SS316anneledElastic(3)</div>
<div class="r" style="left:76px;top:589px;width:17px;height:1px;background:repeating-linear-gradient(to right,#7c7c7c 0 1px,transparent 1px 2px)"></div>
<svg style="left:91.3px;top:574px" width="28" height="28"><use href="#mat"/></svg>
<div class="t" style="left:124.00px;top:577.77px;font-size:22px;line-height:26px;font-family:'Liberation Sans',sans-serif;color:#000;letter-spacing:-0.010px;">Material</div>
<div class="r" style="left:14px;top:621px;width:17px;height:1px;background:repeating-linear-gradient(to right,#7c7c7c 0 1px,transparent 1px 2px)"></div>
<svg style="left:30px;top:607px" width="28" height="28"><use href="#folder"/><path d="M4,6 V19 H22" stroke="#111" stroke-width="2" fill="none"/><circle cx="21" cy="19" r="2.2" fill="#111"/><text x="8" y="12" font-family="Liberation Sans" font-weight="bold" font-size="8" fill="#111">t0</text></svg>
<div class="t" style="left:61.47px;top:609.77px;font-size:22px;line-height:26px;font-family:'Liberation Sans',sans-serif;color:#000;letter-spacing:-0.241px;">Initial Conditions</div>
<div class="r" style="left:20px;top:653px;width:11px;height:1px;background:repeating-linear-gradient(to right,#7c7c7c 0 1px,transparent 1px 2px)"></div>
<svg style="left:7px;top:646px" width="14" height="14"><use href="#exp_minus"/></svg>
<svg style="left:30px;top:639px" width="28" height="28"><use href="#folder"/><path d="M8,8 L14,14" stroke="#23a03a" stroke-width="2.6"/><path d="M11,15 L16,15 L16,10 Z" fill="#23a03a"/><path d="M12,23 L25,11" stroke="#e02020" stroke-width="2.2"/></svg>
<div class="t" style="left:61.70px;top:641.77px;font-size:22px;line-height:26px;font-family:'Liberation Sans',sans-serif;color:#000;letter-spacing:-0.539px;">Loads &amp; Constraints</div>
<div class="r" style="left:51px;top:685px;width:11px;height:1px;background:repeating-linear-gradient(to right,#7c7c7c 0 1px,transparent 1px 2px)"></div>
<svg style="left:38px;top:678px" width="14" height="14"><use href="#exp_plus"/></svg>
<svg style="left:61.5px;top:671px" width="28" height="28"><use href="#folder"/><path d="M8,8 L14,14" stroke="#23a03a" stroke-width="2.6"/><path d="M11,15 L16,15 L16,10 Z" fill="#23a03a"/><path d="M12,23 L25,11" stroke="#e02020" stroke-width="2.2"/></svg>
<div class="t" style="left:93.50px;top:673.77px;font-size:22px;line-height:26px;font-family:'Liberation Sans',sans-serif;color:#000;letter-spacing:-0.553px;">Node_Rotation</div>
<div class="r" style="left:45px;top:717px;width:17px;height:1px;background:repeating-linear-gradient(to right,#7c7c7c 0 1px,transparent 1px 2px)"></div>
<svg style="left:61.0px;top:709px" width="28" height="28"><use href="#arc"/></svg>
<div class="t" style="left:94.97px;top:705.77px;font-size:22px;line-height:26px;font-family:'Liberation Sans',sans-serif;color:#b81c1c;letter-spacing:-0.709px;">thermal stress &lt;0 °C&gt;</div>
<div class="r" style="left:45px;top:749px;width:17px;height:1px;background:repeating-linear-gradient(to right,#7c7c7c 0 1px,transparent 1px 2px)"></div>
<svg style="left:61.0px;top:736px" width="28" height="28"><use href="#disp"/></svg>
<div class="t" style="left:94.38px;top:737.77px;font-size:22px;line-height:26px;font-family:'Liberation Sans',sans-serif;color:#000;letter-spacing:-0.577px;">displacement &lt;X</div>
<div class="r" style="left:257px;top:743.2px;width:6px;height:10.7px;border:2px solid #000;background:linear-gradient(to right,transparent 2.2px,#000 2.2px 3.8px,transparent 3.8px),linear-gradient(to bottom,transparent 4.4px,#000 4.4px 6.2px,transparent 6.2px)"></div>
<div class="t" style="left:270.52px;top:737.77px;font-size:22px;line-height:26px;font-family:'Liberation Sans',sans-serif;color:#000;letter-spacing:0.000px;">&gt;</div>
<div class="r" style="left:45px;top:781px;width:17px;height:1px;background:repeating-linear-gradient(to right,#7c7c7c 0 1px,transparent 1px 2px)"></div>
<svg style="left:61.0px;top:768px" width="28" height="28"><use href="#disp"/></svg>
<div class="t" style="left:94.38px;top:769.77px;font-size:22px;line-height:26px;font-family:'Liberation Sans',sans-serif;color:#000;letter-spacing:-0.527px;">displacement &lt;Y&gt;</div>
<div class="r" style="left:45px;top:813px;width:17px;height:1px;background:repeating-linear-gradient(to right,#7c7c7c 0 1px,transparent 1px 2px)"></div>
<svg style="left:61.0px;top:800px" width="28" height="28"><use href="#disp"/></svg>
<div class="t" style="left:94.38px;top:801.77px;font-size:22px;line-height:26px;font-family:'Liberation Sans',sans-serif;color:#000;letter-spacing:-0.445px;">displacement &lt;Z&gt;</div>
<div class="r" style="left:45px;top:845px;width:17px;height:1px;background:repeating-linear-gradient(to right,#7c7c7c 0 1px,transparent 1px 2px)"></div>
<svg style="left:61.0px;top:832px" width="28" height="28"><use href="#fixed"/></svg>
<div class="t" style="left:94.99px;top:833.77px;font-size:22px;line-height:26px;font-family:'Liberation Sans',sans-serif;color:#b81c1c;letter-spacing:-0.441px;">fixed support</div>
<div class="r" style="left:45px;top:877px;width:17px;height:1px;background:repeating-linear-gradient(to right,#7c7c7c 0 1px,transparent 1px 2px)"></div>
<svg style="left:61.0px;top:864px" width="28" height="28"><use href="#disp"/></svg>
<div class="t" style="left:94.38px;top:865.77px;font-size:22px;line-height:26px;font-family:'Liberation Sans',sans-serif;color:#c8c8c8;letter-spacing:-0.577px;">displacement &lt;X</div>
<div class="r" style="left:257px;top:871.2px;width:6px;height:10.7px;border:2px solid #c8c8c8;background:linear-gradient(to right,transparent 2.2px,#c8c8c8 2.2px 3.8px,transparent 3.8px),linear-gradient(to bottom,transparent 4.4px,#c8c8c8 4.4px 6.2px,transparent 6.2px)"></div>
<div class="t" style="left:270.52px;top:865.77px;font-size:22px;line-height:26px;font-family:'Liberation Sans',sans-serif;color:#c8c8c8;letter-spacing:0.000px;">&gt;</div>
<div class="r" style="left:45px;top:909px;width:17px;height:1px;background:repeating-linear-gradient(to right,#7c7c7c 0 1px,transparent 1px 2px)"></div>
<svg style="left:61.0px;top:896px" width="28" height="28"><use href="#disp"/></svg>
<div class="t" style="left:94.38px;top:897.77px;font-size:22px;line-height:26px;font-family:'Liberation Sans',sans-serif;color:#000;letter-spacing:-0.594px;">displacement &lt;X&gt;</div>
<div class="r" style="left:45px;top:941px;width:17px;height:1px;background:repeating-linear-gradient(to right,#7c7c7c 0 1px,transparent 1px 2px)"></div>
<svg style="left:61.0px;top:928px" width="28" height="28"><use href="#disp"/></svg>
<div class="t" style="left:94.38px;top:929.77px;font-size:22px;line-height:26px;font-family:'Liberation Sans',sans-serif;color:#000;letter-spacing:-0.577px;">displacement &lt;X</div>
<div class="r" style="left:257px;top:935.2px;width:6px;height:10.7px;border:2px solid #000;background:linear-gradient(to right,transparent 2.2px,#000 2.2px 3.8px,transparent 3.8px),linear-gradient(to bottom,transparent 4.4px,#000 4.4px 6.2px,transparent 6.2px)"></div>
<div class="t" style="left:270.52px;top:929.77px;font-size:22px;line-height:26px;font-family:'Liberation Sans',sans-serif;color:#000;letter-spacing:0.000px;">&gt;</div>
<div class="r" style="left:14px;top:973px;width:17px;height:1px;background:repeating-linear-gradient(to right,#7c7c7c 0 1px,transparent 1px 2px)"></div>
<svg style="left:30px;top:959px" width="28" height="28"><use href="#folder"/><g transform="translate(9,6)"><rect x="0" y="3" width="15" height="13" fill="#8a8a9a" stroke="#333" stroke-width="0.8"/><rect x="1.5" y="6" width="5" height="5" fill="#f0f020"/><rect x="7.5" y="6" width="5" height="5" fill="#f0f020"/><path d="M0,3 L4,0 H19 L15,3 M19,0 V13 L15,16" fill="#a0a0b0" stroke="#333" stroke-width="0.8"/></g></svg>
<div class="t" style="left:61.70px;top:961.77px;font-size:22px;line-height:26px;font-family:'Liberation Sans',sans-serif;color:#000;letter-spacing:-0.669px;">Named Selections</div>
<div class="r" style="left:20px;top:1005px;width:11px;height:1px;background:repeating-linear-gradient(to right,#7c7c7c 0 1px,transparent 1px 2px)"></div>
<svg style="left:7px;top:998px" width="14" height="14"><use href="#exp_minus"/></svg>
<svg style="left:30px;top:991px" width="28" height="28"><use href="#folder"/><text x="4.5" y="19.5" font-family="Liberation Mono" font-weight="bold" font-size="11" fill="#d23010" textLength="19" lengthAdjust="spacingAndGlyphs">CCX</text></svg>
<div class="t" style="left:62.38px;top:993.77px;font-size:22px;line-height:26px;font-family:'Liberation Sans',sans-serif;color:#000;letter-spacing:-3.835px;">CCX</div>
<div class="r" style="left:45px;top:1037px;width:17px;height:1px;background:repeating-linear-gradient(to right,#7c7c7c 0 1px,transparent 1px 2px)"></div>
<div class="t" style="left:93.84px;top:1025.77px;font-size:22px;line-height:26px;font-family:'Liberation Sans',sans-serif;color:#000;letter-spacing:-1.148px;">modify keyword &lt;*STATIC,SOLVER=PARDISO&gt;</div>
<div class="r" style="left:20px;top:1069px;width:11px;height:1px;background:repeating-linear-gradient(to right,#7c7c7c 0 1px,transparent 1px 2px)"></div>
<svg style="left:7px;top:1062px" width="14" height="14"><use href="#exp_minus"/></svg>
<svg style="left:30px;top:1055px" width="28" height="28"><use href="#folder"/><text x="4.5" y="19.5" font-family="Liberation Mono" font-weight="bold" font-size="11" fill="#1e9a46" textLength="19" lengthAdjust="spacingAndGlyphs">RAD</text></svg>
<div class="t" style="left:62.46px;top:1057.77px;font-size:22px;line-height:26px;font-family:'Liberation Sans',sans-serif;color:#000;letter-spacing:-0.996px;">OpenRadioss</div>
<div class="r" style="left:45px;top:1101px;width:17px;height:1px;background:repeating-linear-gradient(to right,#7c7c7c 0 1px,transparent 1px 2px)"></div>
<svg style="left:61.0px;top:1088px" width="28" height="28"><use href="#raddoc"/></svg>
<div class="t" style="left:94.37px;top:1089.77px;font-size:22px;line-height:26px;font-family:'Liberation Sans',sans-serif;color:#000;letter-spacing:-0.289px;">custom engine input</div>
<div class="r" style="left:45px;top:1133px;width:17px;height:1px;background:repeating-linear-gradient(to right,#7c7c7c 0 1px,transparent 1px 2px)"></div>
<svg style="left:61.0px;top:1120px" width="28" height="28"><use href="#raddoc"/></svg>
<div class="t" style="left:94.37px;top:1121.77px;font-size:22px;line-height:26px;font-family:'Liberation Sans',sans-serif;color:#c8c8c8;letter-spacing:-0.175px;">custom model definition</div>
<div class="r" style="left:20px;top:1165px;width:11px;height:1px;background:repeating-linear-gradient(to right,#7c7c7c 0 1px,transparent 1px 2px)"></div>
<svg style="left:7px;top:1158px" width="14" height="14"><use href="#exp_minus"/></svg>
<svg style="left:30px;top:1151px" width="28" height="28"><use href="#folder"/><g transform="translate(6,5) scale(0.62)"><path d="M13,1.5 L25.5,25 H1 Z" fill="url(#gTri)" stroke="#111" stroke-width="2.2"/></g></svg>
<div class="t" style="left:62.50px;top:1153.77px;font-size:22px;line-height:26px;font-family:'Liberation Sans',sans-serif;color:#000;letter-spacing:-0.296px;">Solution</div>
<div class="r" style="left:51px;top:1197px;width:11px;height:1px;background:repeating-linear-gradient(to right,#7c7c7c 0 1px,transparent 1px 2px)"></div>
<svg style="left:38px;top:1190px" width="14" height="14"><use href="#exp_plus"/></svg>
<svg style="left:61.5px;top:1183px" width="28" height="28"><use href="#folder"/><g transform="translate(7.5,3.5) scale(0.68)"><path d="M1.4,9.3 H8.9 V8 A3.9,3.9 0 1 1 12.1,8 V9.3 H19.3 V16.6 H20 A3.9,3.9 0 1 1 20,19.8 H19.3 V27.1 H1.4 V19.2 H2.2 A3.7,3.7 0 1 0 2.2,16.3 H1.4 Z" fill="#2faa4a" stroke="#0d3a12" stroke-width="2.4"/></g></svg>
<div class="t" style="left:94.18px;top:1185.77px;font-size:22px;line-height:26px;font-family:'Liberation Sans',sans-serif;color:#000;letter-spacing:-0.747px;">Components</div>
<div class="r" style="left:51px;top:1229px;width:11px;height:1px;background:repeating-linear-gradient(to right,#7c7c7c 0 1px,transparent 1px 2px)"></div>
<svg style="left:38px;top:1222px" width="14" height="14"><use href="#exp_plus"/></svg>
<svg style="left:61.3px;top:1215px" width="28" height="28"><use href="#tri"/></svg>
<div class="t" style="left:95.22px;top:1217.77px;font-size:22px;line-height:26px;font-family:'Liberation Sans',sans-serif;color:#fff;letter-spacing:-0.937px;">von Mises stress</div>
<div class="r" style="left:51px;top:1261px;width:11px;height:1px;background:repeating-linear-gradient(to right,#7c7c7c 0 1px,transparent 1px 2px)"></div>
<svg style="left:38px;top:1254px" width="14" height="14"><use href="#exp_minus"/></svg>
<svg style="left:62.0px;top:1247px" width="28" height="28"><use href="#darrows"/></svg>
<div class="t" style="left:94.38px;top:1249.77px;font-size:22px;line-height:26px;font-family:'Liberation Sans',sans-serif;color:#000;letter-spacing:-0.640px;">displacement</div>
<div class="r" style="left:76px;top:1293px;width:17px;height:1px;background:repeating-linear-gradient(to right,#7c7c7c 0 1px,transparent 1px 2px)"></div>
<svg style="left:91.5px;top:1278px" width="28" height="28"><use href="#trinode"/></svg>
<div class="t" style="left:124.34px;top:1281.77px;font-size:22px;line-height:26px;font-family:'Liberation Sans',sans-serif;color:#000;letter-spacing:-0.287px;">magnitude</div>
<div class="r" style="left:76px;top:1325px;width:17px;height:1px;background:repeating-linear-gradient(to right,#7c7c7c 0 1px,transparent 1px 2px)"></div>
<svg style="left:91.5px;top:1310px" width="28" height="28"><use href="#trinode"/></svg>
<div class="t" style="left:125.31px;top:1313.77px;font-size:22px;line-height:26px;font-family:'Liberation Sans',sans-serif;color:#000;letter-spacing:0.000px;">X</div>
</div>
<div class="r" style="left:568px;top:189px;width:29px;height:1143px;background:#f0f0f0;"></div>
<div class="r" style="left:579px;top:219px;width:7px;height:574px;background:#858585;border-radius:4px;"></div>
<div class="r" style="left:597px;top:187px;width:1px;height:1145px;background:#d4d4d4;"></div>
<div class="r" style="left:606px;top:187px;width:779px;height:1152px;background:#ffffff;"></div>
<div class="r" style="left:606px;top:187px;width:779px;height:2px;background:#808080;"></div>
<div class="r" style="left:606px;top:187px;width:2px;height:1152px;background:#808080;"></div>
<svg style="left:0;top:0" width="1388" height="1516" viewBox="0 0 1388 1516"><clipPath id="cf1"><polygon points="1094.0,393.0 1301.0,392.4 1382.5,401.0 1368.4,506.3 1285.7,492.0 1093.0,428.3"/></clipPath><clipPath id="ct1"><polygon points="1095.4,389.0 1296.3,376.3 1379.0,385.8 1382.5,401.0 1301.0,392.4 1094.0,393.0"/></clipPath><line x1="1099.0" y1="287.0" x2="1223.0" y2="302.0" stroke="#00eeff" stroke-width="6" stroke-linecap="round"/><line x1="1106.0" y1="307.0" x2="1221.0" y2="322.0" stroke="#00eeff" stroke-width="6" stroke-linecap="round"/><line x1="1099.0" y1="287.0" x2="1106.0" y2="307.0" stroke="#00eeff" stroke-width="6" stroke-linecap="round"/><line x1="1223.0" y1="302.0" x2="1221.0" y2="322.0" stroke="#00eeff" stroke-width="6" stroke-linecap="round"/><line x1="1099.0" y1="287.0" x2="1082.0" y2="407.0" stroke="#00eeff" stroke-width="6" stroke-linecap="round"/><line x1="1106.0" y1="307.0" x2="1091.0" y2="424.0" stroke="#00eeff" stroke-width="6" stroke-linecap="round"/><line x1="1223.0" y1="302.0" x2="1217.0" y2="388.0" stroke="#00eeff" stroke-width="6" stroke-linecap="round"/><line x1="1219.0" y1="322.0" x2="1211.0" y2="384.0" stroke="#00eeff" stroke-width="6" stroke-linecap="round"/><line x1="1082.0" y1="407.0" x2="1091.0" y2="424.0" stroke="#00eeff" stroke-width="6" stroke-linecap="round"/><g clip-path="url(#cf1)"><polygon points="1060.0,360.0 1121.8,360.0 1101.8,530.0 1060.0,530.0" fill="#ff0000"/><polygon points="1121.8,360.0 1173.9,360.0 1153.4,530.0 1101.8,530.0" fill="#ff9000"/><polygon points="1173.9,360.0 1226.2,360.0 1204.1,530.0 1153.4,530.0" fill="#dcff00"/><polygon points="1226.2,360.0 1291.3,360.0 1268.2,530.0 1204.1,530.0" fill="#52ff00"/><polygon points="1291.3,360.0 1319.4,360.0 1297.7,530.0 1268.2,530.0" fill="#00ff3a"/><polygon points="1319.4,360.0 1340.5,360.0 1319.6,530.0 1297.7,530.0" fill="#00ffd8"/><polygon points="1340.5,360.0 1366.4,360.0 1346.3,530.0 1319.6,530.0" fill="#0090ff"/><polygon points="1366.4,360.0 1422.8,360.0 1408.3,530.0 1346.3,530.0" fill="#0000ff"/></g><g clip-path="url(#ct1)"><polygon points="1060.0,360.0 1121.8,360.0 1101.8,530.0 1060.0,530.0" fill="#b70000"/><polygon points="1121.8,360.0 1173.9,360.0 1153.4,530.0 1101.8,530.0" fill="#b76700"/><polygon points="1173.9,360.0 1226.2,360.0 1204.1,530.0 1153.4,530.0" fill="#9eb700"/><polygon points="1226.2,360.0 1291.3,360.0 1268.2,530.0 1204.1,530.0" fill="#3bb700"/><polygon points="1291.3,360.0 1319.4,360.0 1297.7,530.0 1268.2,530.0" fill="#00b729"/><polygon points="1319.4,360.0 1340.5,360.0 1319.6,530.0 1297.7,530.0" fill="#00b79b"/><polygon points="1340.5,360.0 1366.4,360.0 1346.3,530.0 1319.6,530.0" fill="#0067b7"/><polygon points="1366.4,360.0 1422.8,360.0 1408.3,530.0 1346.3,530.0" fill="#0000b7"/></g><polygon points="1094.0,393.0 1301.0,392.4 1382.5,401.0 1368.4,506.3 1285.7,492.0 1093.0,428.3" fill="none" stroke="#111" stroke-width="1"/><polyline points="1095.4,389.0 1296.3,376.3 1379.0,385.8" fill="none" stroke="#111" stroke-width="1"/><line x1="1301" y1="392.4" x2="1285.7" y2="492" stroke="#111" stroke-width="1"/><line x1="1296.3" y1="376.3" x2="1301" y2="392.4" stroke="#111" stroke-width="1"/><line x1="1208.0" y1="383.0" x2="1210.0" y2="389.0" stroke="#00eeff" stroke-width="3" stroke-linecap="round"/><rect x="1082.5" y="415.5" width="9" height="9" fill="#e8000a"/><rect x="1087.5" y="422.5" width="9" height="9" fill="#e8000a"/><rect x="1086.5" y="387.5" width="9" height="9" fill="#e8000a"/><rect x="1291.5" y="372.5" width="9" height="9" fill="#e8000a"/><rect x="1296.5" y="388.5" width="9" height="9" fill="#e8000a"/><rect x="1281.5" y="487.5" width="9" height="9" fill="#e8000a"/><rect x="1375.5" y="382.5" width="9" height="9" fill="#e8000a"/><rect x="1378.5" y="396.5" width="9" height="9" fill="#e8000a"/><rect x="1364.5" y="501.5" width="9" height="9" fill="#e8000a"/><line x1="1046.7" y1="646.0" x2="1171.7" y2="661.8" stroke="#00eeff" stroke-width="6" stroke-linecap="round"/><line x1="1055.3" y1="666.7" x2="1166.8" y2="681.4" stroke="#00eeff" stroke-width="6" stroke-linecap="round"/><line x1="1046.7" y1="646.0" x2="1055.3" y2="666.7" stroke="#00eeff" stroke-width="6" stroke-linecap="round"/><line x1="1171.7" y1="661.8" x2="1166.8" y2="681.4" stroke="#00eeff" stroke-width="6" stroke-linecap="round"/><line x1="1046.7" y1="646.0" x2="1030.0" y2="770.0" stroke="#00eeff" stroke-width="6" stroke-linecap="round"/><line x1="1171.7" y1="661.8" x2="1173.0" y2="705.0" stroke="#00eeff" stroke-width="6" stroke-linecap="round"/><line x1="1166.8" y1="681.4" x2="1168.0" y2="705.0" stroke="#00eeff" stroke-width="6" stroke-linecap="round"/><polygon points="1045.5,674.0 1186.0,692.5 1331.0,712.0 1333.4,731.7 1190.8,712.8 1049.2,695.0" fill="#0073c8" stroke="#111" stroke-width="1"/><polygon points="1045.5,674.0 1049.2,695.0 1037.0,785.6 1029.6,769.6" fill="#0068b8" stroke="#111" stroke-width="1"/><polygon points="1049.2,695.0 1190.8,712.8 1333.4,731.7 1320.6,823.5 1176.6,805.0 1037.0,785.6" fill="#0090ff" stroke="#111" stroke-width="1"/><line x1="1190.8" y1="712.8" x2="1176.6" y2="805" stroke="#111" stroke-width="1"/><line x1="1186" y1="692.5" x2="1190.8" y2="712.8" stroke="#111" stroke-width="1"/><line x1="1037.0" y1="786.0" x2="1158.0" y2="801.0" stroke="#00eeff" stroke-width="3" stroke-linecap="round"/><line x1="1033.0" y1="782.0" x2="1049.0" y2="690.0" stroke="#00eeff" stroke-width="3" stroke-linecap="round"/><line x1="1050.0" y1="680.0" x2="1045.0" y2="700.0" stroke="#00eeff" stroke-width="3" stroke-linecap="round"/><polygon points="1155,800 1163,770 1161,801" fill="#00eeff"/><rect x="1040.5" y="669.5" width="9" height="9" fill="#e8000a"/><rect x="1045.5" y="690.5" width="9" height="9" fill="#e8000a"/><rect x="1181.5" y="688.5" width="9" height="9" fill="#e8000a"/><rect x="1186.5" y="708.5" width="9" height="9" fill="#e8000a"/><rect x="1326.5" y="708.5" width="9" height="9" fill="#e8000a"/><rect x="1328.5" y="727.5" width="9" height="9" fill="#e8000a"/><rect x="1032.5" y="781.5" width="9" height="9" fill="#e8000a"/><rect x="1172.5" y="801.5" width="9" height="9" fill="#e8000a"/><rect x="1316.5" y="819.5" width="9" height="9" fill="#e8000a"/><rect x="1025.5" y="765.5" width="9" height="9" fill="#e8000a"/><clipPath id="cf3"><polygon points="990.4,1108.2 1194.3,1108.2 1280.5,1116.4 1265.2,1220.4 1179.5,1204.2 987.5,1145.0"/></clipPath><clipPath id="ct3"><polygon points="990.4,1103.0 1189.9,1090.4 1275.5,1099.9 1280.5,1116.4 1194.3,1108.2 990.4,1108.2"/></clipPath><line x1="901.8" y1="1111.7" x2="978.6" y2="1123" stroke="#111" stroke-width="1.2"/><line x1="968.3" y1="1200.3" x2="990.4" y2="1044.7" stroke="#111" stroke-width="1.2"/><line x1="996.4" y1="1003.3" x2="1119.0" y2="1018.0" stroke="#00eeff" stroke-width="6" stroke-linecap="round"/><line x1="1003.7" y1="1024.0" x2="1120.4" y2="1038.7" stroke="#00eeff" stroke-width="6" stroke-linecap="round"/><line x1="996.4" y1="1003.3" x2="1003.7" y2="1024.0" stroke="#00eeff" stroke-width="6" stroke-linecap="round"/><line x1="1119.0" y1="1018.0" x2="1120.4" y2="1038.7" stroke="#00eeff" stroke-width="6" stroke-linecap="round"/><line x1="996.4" y1="1003.3" x2="980.0" y2="1123.0" stroke="#00eeff" stroke-width="6" stroke-linecap="round"/><line x1="1003.7" y1="1024.0" x2="987.5" y2="1140.7" stroke="#00eeff" stroke-width="6" stroke-linecap="round"/><line x1="1119.0" y1="1018.0" x2="1113.0" y2="1103.7" stroke="#00eeff" stroke-width="6" stroke-linecap="round"/><line x1="1120.4" y1="1038.7" x2="1107.0" y2="1096.0" stroke="#00eeff" stroke-width="6" stroke-linecap="round"/><line x1="980.0" y1="1123.0" x2="987.5" y2="1140.7" stroke="#00eeff" stroke-width="6" stroke-linecap="round"/><g clip-path="url(#cf3)"><polygon points="963.3,1080.0 1042.1,1080.0 1025.5,1240.0 944.3,1240.0" fill="#ff0000"/><polygon points="1042.1,1080.0 1106.6,1080.0 1087.8,1240.0 1025.5,1240.0" fill="#ff9000"/><polygon points="1106.6,1080.0 1157.0,1080.0 1138.6,1240.0 1087.8,1240.0" fill="#dcff00"/><polygon points="1157.0,1080.0 1203.2,1080.0 1186.3,1240.0 1138.6,1240.0" fill="#52ff00"/><polygon points="1203.2,1080.0 1234.8,1080.0 1214.3,1240.0 1186.3,1240.0" fill="#00ff3a"/><polygon points="1234.8,1080.0 1261.2,1080.0 1241.5,1240.0 1214.3,1240.0" fill="#00ffd8"/><polygon points="1261.2,1080.0 1323.6,1080.0 1303.1,1240.0 1241.5,1240.0" fill="#0090ff"/></g><g clip-path="url(#ct3)"><polygon points="963.3,1080.0 1042.1,1080.0 1025.5,1240.0 944.3,1240.0" fill="#b70000"/><polygon points="1042.1,1080.0 1106.6,1080.0 1087.8,1240.0 1025.5,1240.0" fill="#b76700"/><polygon points="1106.6,1080.0 1157.0,1080.0 1138.6,1240.0 1087.8,1240.0" fill="#9eb700"/><polygon points="1157.0,1080.0 1203.2,1080.0 1186.3,1240.0 1138.6,1240.0" fill="#3bb700"/><polygon points="1203.2,1080.0 1234.8,1080.0 1214.3,1240.0 1186.3,1240.0" fill="#00b729"/><polygon points="1234.8,1080.0 1261.2,1080.0 1241.5,1240.0 1214.3,1240.0" fill="#00b79b"/><polygon points="1261.2,1080.0 1323.6,1080.0 1303.1,1240.0 1241.5,1240.0" fill="#0067b7"/></g><polygon points="990.4,1108.2 1194.3,1108.2 1280.5,1116.4 1265.2,1220.4 1179.5,1204.2 987.5,1145.0" fill="none" stroke="#111" stroke-width="1"/><polyline points="990.4,1103.0 1189.9,1090.4 1275.5,1099.9" fill="none" stroke="#111" stroke-width="1"/><line x1="1194.3" y1="1108.2" x2="1179.5" y2="1204.2" stroke="#111" stroke-width="1"/><line x1="1189.9" y1="1090.4" x2="1194.3" y2="1108.2" stroke="#111" stroke-width="1"/><line x1="1107.0" y1="1096.0" x2="1110.0" y2="1106.0" stroke="#00eeff" stroke-width="3" stroke-linecap="round"/><rect x="980.5" y="1098.5" width="9" height="9" fill="#e8000a"/><rect x="985.5" y="1135.5" width="9" height="9" fill="#e8000a"/><rect x="982.5" y="1140.5" width="9" height="9" fill="#e8000a"/><rect x="1185.5" y="1087.5" width="9" height="9" fill="#e8000a"/><rect x="1189.5" y="1103.5" width="9" height="9" fill="#e8000a"/><rect x="1271.5" y="1096.5" width="9" height="9" fill="#e8000a"/><rect x="1276.5" y="1112.5" width="9" height="9" fill="#e8000a"/><rect x="1175.5" y="1199.5" width="9" height="9" fill="#e8000a"/><rect x="1261.5" y="1215.5" width="9" height="9" fill="#e8000a"/><polygon points="668,239 681,239 694.5,251.5 668,251.5" fill="#d2d2d2" stroke="#a0a0a0" stroke-width="1"/><polygon points="668,582 681,582 694.5,569.5 668,569.5" fill="#d2d2d2" stroke="#a0a0a0" stroke-width="1"/><rect x="674" y="251.5" width="9" height="318" fill="#e4e6e8" stroke="#c8c8c8" stroke-width="1"/><line x1="694" y1="251" x2="708" y2="251" stroke="#999" stroke-width="1"/><line x1="694" y1="570" x2="708" y2="570" stroke="#999" stroke-width="1"/><rect x="708" y="251" width="60" height="38" fill="#ff0000"/><rect x="708" y="291" width="60" height="38" fill="#ff8c00"/><rect x="708" y="331" width="60" height="38" fill="#dcff00"/><rect x="708" y="371" width="60" height="38" fill="#52ff00"/><rect x="708" y="411" width="60" height="38" fill="#00ff3a"/><rect x="708" y="451" width="60" height="38" fill="#00ffd8"/><rect x="708" y="491" width="60" height="38" fill="#0090ff"/><rect x="708" y="531" width="60" height="38" fill="#0000ff"/></svg>
<div class="t" style="left:706.72px;top:192.78px;font-size:29px;line-height:35px;font-family:'Liberation Mono',monospace;color:#282828;letter-spacing:0.662px;">von Mises stress</div>
<div class="t" style="left:789.04px;top:232.38px;font-size:29px;line-height:35px;font-family:'Liberation Mono',monospace;color:#282828;letter-spacing:0.700px;">0.7636</div>
<div class="t" style="left:789.04px;top:272.38px;font-size:29px;line-height:35px;font-family:'Liberation Mono',monospace;color:#282828;letter-spacing:0.700px;">0.6681</div>
<div class="t" style="left:789.04px;top:312.38px;font-size:29px;line-height:35px;font-family:'Liberation Mono',monospace;color:#282828;letter-spacing:0.700px;">0.5727</div>
<div class="t" style="left:789.04px;top:352.38px;font-size:29px;line-height:35px;font-family:'Liberation Mono',monospace;color:#282828;letter-spacing:0.700px;">0.4772</div>
<div class="t" style="left:789.04px;top:392.38px;font-size:29px;line-height:35px;font-family:'Liberation Mono',monospace;color:#282828;letter-spacing:0.700px;">0.3818</div>
<div class="t" style="left:789.04px;top:432.38px;font-size:29px;line-height:35px;font-family:'Liberation Mono',monospace;color:#282828;letter-spacing:0.700px;">0.2863</div>
<div class="t" style="left:789.04px;top:472.38px;font-size:29px;line-height:35px;font-family:'Liberation Mono',monospace;color:#282828;letter-spacing:0.700px;">0.1909</div>
<div class="t" style="left:789.04px;top:512.38px;font-size:29px;line-height:35px;font-family:'Liberation Mono',monospace;color:#282828;letter-spacing:0.700px;">0.09545</div>
<div class="t" style="left:789.04px;top:552.38px;font-size:29px;line-height:35px;font-family:'Liberation Mono',monospace;color:#282828;letter-spacing:0.700px;">0</div>
<div class="t" style="left:786.40px;top:601.78px;font-size:29px;line-height:35px;font-family:'Liberation Mono',monospace;color:#282828;letter-spacing:0.900px;">GPa</div>
<div class="t" style="left:706.62px;top:642.08px;font-size:29px;line-height:35px;font-family:'Liberation Mono',monospace;color:#282828;letter-spacing:0.620px;">Time ≈ 0.009004 s</div>
<div class="t" style="left:707.87px;top:682.28px;font-size:29px;line-height:35px;font-family:'Liberation Mono',monospace;color:#282828;letter-spacing:0.503px;">≈ 0.0001501 min</div>
<div class="t" style="left:705.71px;top:1292.58px;font-size:29px;line-height:35px;font-family:'Liberation Mono',monospace;color:#282828;letter-spacing:0.637px;">Deformation scale factor 1</div>
<div class="r" style="left:2px;top:1342px;width:595px;height:155px;background:#ff0000;"></div>
<div class="r" style="left:2px;top:1342px;width:595px;height:1px;background:#c01010;"></div>
<div class="t" style="left:1.52px;top:1341.85px;font-size:21.5px;line-height:26px;font-family:'Liberation Sans',sans-serif;color:#1a0000;letter-spacing:-0.385px;">Time 0.009882 s</div>
<div class="t" style="left:0.24px;top:1365.65px;font-size:21.5px;line-height:26px;font-family:'Liberation Sans',sans-serif;color:#1a0000;letter-spacing:-0.273px;">Error or warning reported.</div>
<div class="r" style="left:281px;top:1449px;width:148px;height:42px;background:#fdfdfd;border-radius:4px;"></div>
<div class="r" style="left:442px;top:1449px;width:148px;height:42px;background:#fdfdfd;border-radius:4px;"></div>
<div class="t" style="left:309.24px;top:1454.55px;font-size:21.5px;line-height:26px;font-family:'Liberation Sans',sans-serif;color:#000;letter-spacing:0.168px;">Monitor...</div>
<div class="t" style="left:487.91px;top:1454.55px;font-size:21.5px;line-height:26px;font-family:'Liberation Sans',sans-serif;color:#000;letter-spacing:0.070px;">Close</div>
<div class="r" style="left:606px;top:1348px;width:779px;height:149px;background:#f0f0f0;"></div>
<div class="r" style="left:606px;top:1348px;width:779px;height:2px;background:#808080;"></div>
<div class="r" style="left:606px;top:1348px;width:2px;height:149px;background:#808080;"></div>
<svg style="left:0;top:0" width="1388" height="1516" viewBox="0 0 1388 1516"><rect x="724.5" y="1364" width="660.5" height="72.5" fill="#fff"/><line x1="724.5" y1="1388.3" x2="1385" y2="1388.3" stroke="#d4d4d4" stroke-width="1"/><line x1="724.5" y1="1412.4" x2="1385" y2="1412.4" stroke="#d4d4d4" stroke-width="1"/><line x1="902.2" y1="1364" x2="902.2" y2="1436.5" stroke="#d4d4d4" stroke-width="1"/><line x1="1079.9" y1="1364" x2="1079.9" y2="1436.5" stroke="#d4d4d4" stroke-width="1"/><line x1="1257.6" y1="1364" x2="1257.6" y2="1436.5" stroke="#d4d4d4" stroke-width="1"/><line x1="724.5" y1="1364" x2="1385" y2="1364" stroke="#000" stroke-width="1.6"/><line x1="724.5" y1="1436.5" x2="1385" y2="1436.5" stroke="#000" stroke-width="1.6"/><line x1="724.5" y1="1364" x2="724.5" y2="1436.5" stroke="#000" stroke-width="1.6"/><line x1="724.5" y1="1432.5" x2="724.5" y2="1440.5" stroke="#000" stroke-width="1.6"/><line x1="760.0" y1="1435.0" x2="760.0" y2="1439.0" stroke="#000" stroke-width="1.4"/><line x1="795.6" y1="1435.0" x2="795.6" y2="1439.0" stroke="#000" stroke-width="1.4"/><line x1="831.1" y1="1435.0" x2="831.1" y2="1439.0" stroke="#000" stroke-width="1.4"/><line x1="866.7" y1="1435.0" x2="866.7" y2="1439.0" stroke="#000" stroke-width="1.4"/><line x1="902.2" y1="1432.5" x2="902.2" y2="1440.5" stroke="#000" stroke-width="1.6"/><line x1="937.7" y1="1435.0" x2="937.7" y2="1439.0" stroke="#000" stroke-width="1.4"/><line x1="973.3" y1="1435.0" x2="973.3" y2="1439.0" stroke="#000" stroke-width="1.4"/><line x1="1008.8" y1="1435.0" x2="1008.8" y2="1439.0" stroke="#000" stroke-width="1.4"/><line x1="1044.4" y1="1435.0" x2="1044.4" y2="1439.0" stroke="#000" stroke-width="1.4"/><line x1="1079.9" y1="1432.5" x2="1079.9" y2="1440.5" stroke="#000" stroke-width="1.6"/><line x1="1115.4" y1="1435.0" x2="1115.4" y2="1439.0" stroke="#000" stroke-width="1.4"/><line x1="1151.0" y1="1435.0" x2="1151.0" y2="1439.0" stroke="#000" stroke-width="1.4"/><line x1="1186.5" y1="1435.0" x2="1186.5" y2="1439.0" stroke="#000" stroke-width="1.4"/><line x1="1222.1" y1="1435.0" x2="1222.1" y2="1439.0" stroke="#000" stroke-width="1.4"/><line x1="1257.6" y1="1432.5" x2="1257.6" y2="1440.5" stroke="#000" stroke-width="1.6"/><line x1="1293.1" y1="1435.0" x2="1293.1" y2="1439.0" stroke="#000" stroke-width="1.4"/><line x1="1328.7" y1="1435.0" x2="1328.7" y2="1439.0" stroke="#000" stroke-width="1.4"/><line x1="1364.2" y1="1435.0" x2="1364.2" y2="1439.0" stroke="#000" stroke-width="1.4"/><line x1="719.3" y1="1436.5" x2="729.7" y2="1436.5" stroke="#000" stroke-width="1.4"/><line x1="722" y1="1431.7" x2="727" y2="1431.7" stroke="#000" stroke-width="1.1"/><line x1="722" y1="1426.8" x2="727" y2="1426.8" stroke="#000" stroke-width="1.1"/><line x1="722" y1="1422.0" x2="727" y2="1422.0" stroke="#000" stroke-width="1.1"/><line x1="722" y1="1417.2" x2="727" y2="1417.2" stroke="#000" stroke-width="1.1"/><line x1="719.3" y1="1412.3" x2="729.7" y2="1412.3" stroke="#000" stroke-width="1.4"/><line x1="722" y1="1407.5" x2="727" y2="1407.5" stroke="#000" stroke-width="1.1"/><line x1="722" y1="1402.7" x2="727" y2="1402.7" stroke="#000" stroke-width="1.1"/><line x1="722" y1="1397.8" x2="727" y2="1397.8" stroke="#000" stroke-width="1.1"/><line x1="722" y1="1393.0" x2="727" y2="1393.0" stroke="#000" stroke-width="1.1"/><line x1="719.3" y1="1388.2" x2="729.7" y2="1388.2" stroke="#000" stroke-width="1.4"/><line x1="722" y1="1383.3" x2="727" y2="1383.3" stroke="#000" stroke-width="1.1"/><line x1="722" y1="1378.5" x2="727" y2="1378.5" stroke="#000" stroke-width="1.1"/><line x1="722" y1="1373.7" x2="727" y2="1373.7" stroke="#000" stroke-width="1.1"/><line x1="722" y1="1368.8" x2="727" y2="1368.8" stroke="#000" stroke-width="1.1"/><line x1="719.3" y1="1364.0" x2="729.7" y2="1364.0" stroke="#000" stroke-width="1.4"/><rect x="615.5" y="1458.5" width="35" height="31.5" rx="3" fill="#fafafa" stroke="#cfcfcf" stroke-width="1"/><rect x="653.5" y="1458.5" width="23.5" height="31.5" rx="3" fill="#fafafa" stroke="#cfcfcf" stroke-width="1"/><polygon points="619,1465 631.5,1474.8 619,1484.7" fill="#000"/><rect x="634.5" y="1465" width="5.2" height="19.7" fill="#000"/><rect x="642.5" y="1465" width="5.2" height="19.7" fill="#000"/><polygon points="658,1470.5 673,1470.5 665.5,1478.5" fill="#000"/></svg>
<div class="t" style="left:688.31px;top:1353.71px;font-size:17px;line-height:20px;font-family:'Liberation Sans',sans-serif;color:#2a2a2a;letter-spacing:-0.312px;">1.5</div>
<div class="t" style="left:688.31px;top:1377.87px;font-size:17px;line-height:20px;font-family:'Liberation Sans',sans-serif;color:#2a2a2a;letter-spacing:-0.337px;">1.0</div>
<div class="t" style="left:688.94px;top:1402.04px;font-size:17px;line-height:20px;font-family:'Liberation Sans',sans-serif;color:#2a2a2a;letter-spacing:-0.627px;">0.5</div>
<div class="t" style="left:688.94px;top:1426.21px;font-size:17px;line-height:20px;font-family:'Liberation Sans',sans-serif;color:#2a2a2a;letter-spacing:-0.652px;">0.0</div>
<div class="t" style="left:704.54px;top:1445.61px;font-size:17px;line-height:20px;font-family:'Liberation Sans',sans-serif;color:#2a2a2a;letter-spacing:-0.653px;">0.000</div>
<div class="t" style="left:882.24px;top:1445.61px;font-size:17px;line-height:20px;font-family:'Liberation Sans',sans-serif;color:#2a2a2a;letter-spacing:-0.612px;">0.001</div>
<div class="t" style="left:1059.94px;top:1445.61px;font-size:17px;line-height:20px;font-family:'Liberation Sans',sans-serif;color:#2a2a2a;letter-spacing:-0.606px;">0.002</div>
<div class="t" style="left:1237.64px;top:1445.61px;font-size:17px;line-height:20px;font-family:'Liberation Sans',sans-serif;color:#2a2a2a;letter-spacing:-0.633px;">0.003</div>
<div class="r" style="left:2px;top:1497px;width:1384px;height:17px;background:#f0f0f0;"></div>
<div class="r" style="left:2px;top:1497px;width:1384px;height:4px;background:#fafafa;"></div>
<div class="r" style="left:2px;top:1503px;width:1384px;height:1px;background:#d8d8d8;"></div>
<div class="t" style="left:-0.06px;top:1505.95px;font-size:21.5px;line-height:26px;font-family:'Liberation Sans',sans-serif;color:#000;letter-spacing:-0.438px;">Elements: 2</div>
<div class="t" style="left:135.74px;top:1505.95px;font-size:21.5px;line-height:26px;font-family:'Liberation Sans',sans-serif;color:#000;letter-spacing:-0.083px;">Nodes: 22</div>
<div class="t" style="left:262.52px;top:1505.95px;font-size:21.5px;line-height:26px;font-family:'Liberation Sans',sans-serif;color:#000;letter-spacing:-0.161px;">Selected nodes: 2</div>
<div class="r" style="left:0px;top:0px;width:1388px;height:2px;background:#ee0a0a;"></div>
<div class="r" style="left:0px;top:0px;width:2px;height:1516px;background:#ee0a0a;"></div>
<div class="r" style="left:1385px;top:0px;width:3px;height:1516px;background:#ee0a0a;"></div>
<div class="r" style="left:0px;top:1514px;width:1388px;height:2px;background:#ee0a0a;"></div>
</body></html>
